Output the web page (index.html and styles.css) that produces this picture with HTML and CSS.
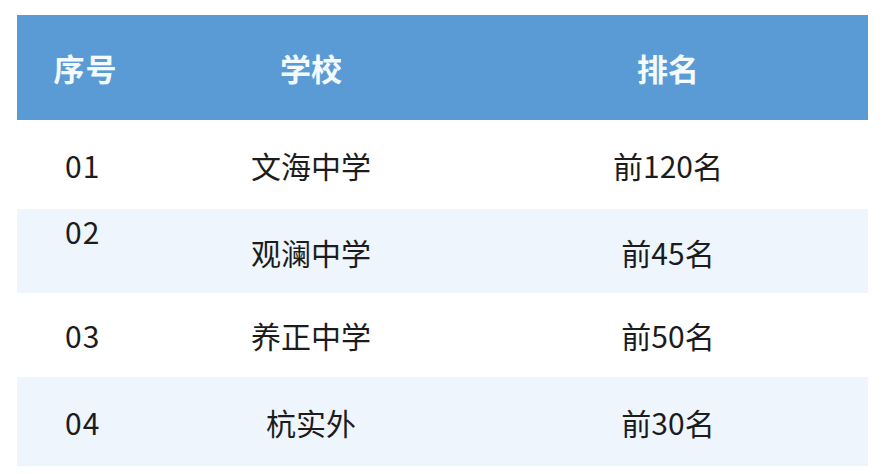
FILE: index.html
```html
<!DOCTYPE html>
<html lang="zh">
<head>
<meta charset="utf-8">
<link rel="stylesheet" href="styles.css">
</head>
<body>
<div class="table">
  <div class="row head">
    <div class="cell c1">序号</div>
    <div class="cell c2">学校</div>
    <div class="cell c3">排名</div>
  </div>
  <div class="row r1">
    <div class="cell c1">01</div>
    <div class="cell c2">文海中学</div>
    <div class="cell c3">前120名</div>
  </div>
  <div class="row r2 alt">
    <div class="cell c1 top">02</div>
    <div class="cell c2">观澜中学</div>
    <div class="cell c3">前45名</div>
  </div>
  <div class="row r3">
    <div class="cell c1">03</div>
    <div class="cell c2">养正中学</div>
    <div class="cell c3">前50名</div>
  </div>
  <div class="row r4 alt">
    <div class="cell c1">04</div>
    <div class="cell c2">杭实外</div>
    <div class="cell c3">前30名</div>
  </div>
</div>
</body>
</html>
```
FILE: styles.css
```css
html, body {
  margin: 0;
  padding: 0;
  background: #ffffff;
}
body {
  padding: 15px 16px 0 17px;
  font-family: "Noto Sans CJK SC", "Noto Sans", sans-serif;
  color: #1c1c1c;
}
.table {
  width: 851px;
  display: flex;
  flex-direction: column;
}
.row {
  display: grid;
  grid-template-columns: 137px 314px 400px;
  align-items: center;
  font-size: 30px;
  line-height: 38px;
}
.head {
  height: 105px;
  background: #5b9bd5;
  color: #f4fbff;
  font-weight: 700;
  font-size: 31px;
}
.head .c1 {
  text-align: center;
  padding-left: 0;
}
.r1 { height: 89px; padding-top: 0; box-sizing: border-box; }
.r2 { height: 84px; }
.r3 { height: 84px; }
.r4 { height: 89px; }
.alt { background: #eef5fd; }
.cell {
  white-space: nowrap;
}
.c1 {
  padding-left: 48px;
  letter-spacing: 1px;
}
.c2, .c3 {
  text-align: center;
}
.r2 .c2, .r2 .c3 { padding-top: 2px; }
.top {
  align-self: start;
  padding-top: 3px;
}
.r4 .cell { padding-top: 0; }
```
